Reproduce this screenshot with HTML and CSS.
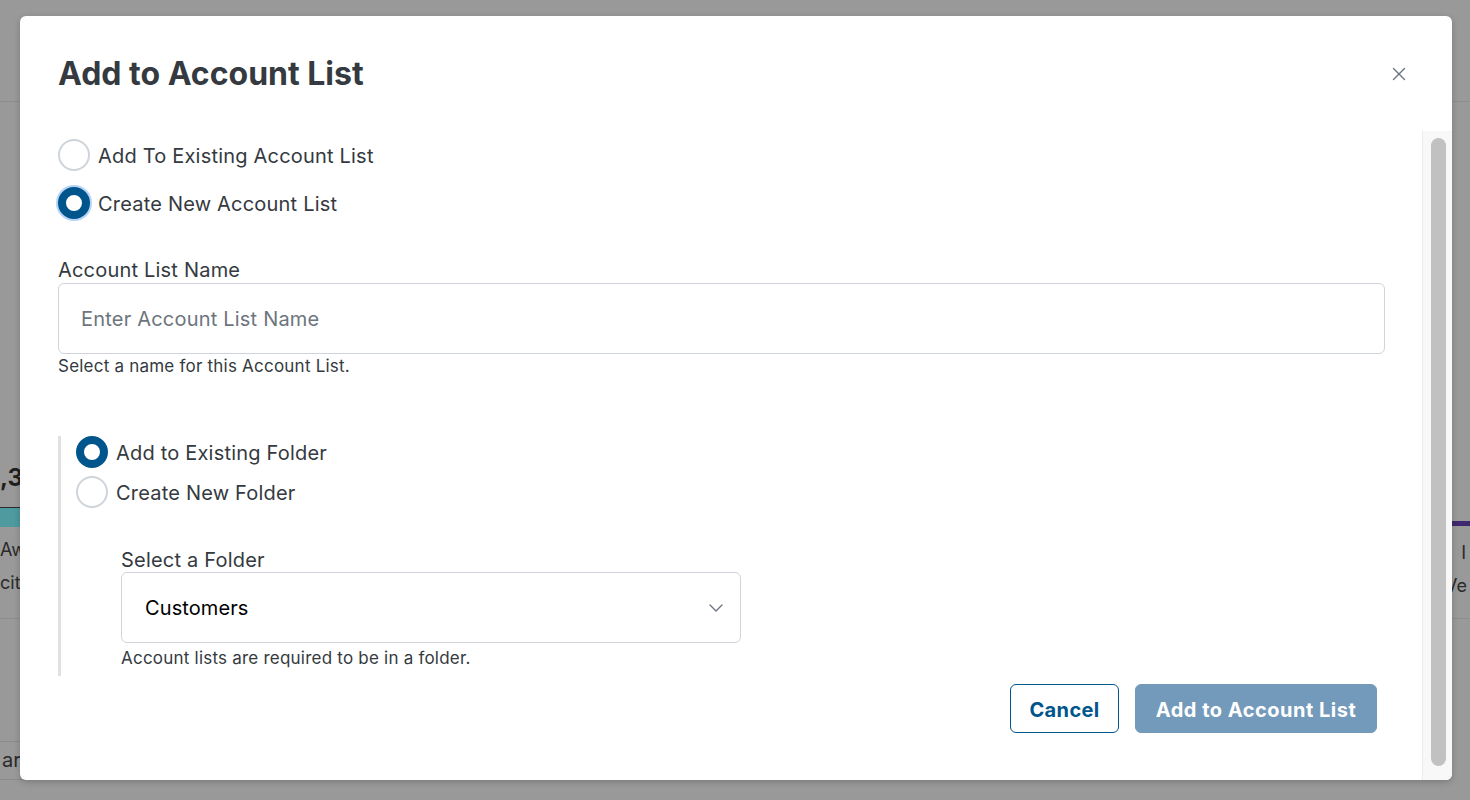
FILE: index.html
```html
<!DOCTYPE html>
<html lang="en">
<head>
<meta charset="utf-8">
<title>Add to Account List</title>
<link rel="stylesheet" href="styles.css">
</head>
<body>
<div class="page">
  <div class="page-header"></div>
  <div class="page-stats">
    <div class="stat stat-left">
      <div class="stat-num">,3</div>
      <div class="stat-bar teal"></div>
      <div class="stat-title">Aw</div>
      <div class="stat-sub">cit</div>
    </div>
    <div class="stat stat-right">
      <div class="stat-num">&nbsp;</div>
      <div class="stat-bar purple"></div>
      <div class="stat-title">I</div>
      <div class="stat-sub">Ve</div>
    </div>
  </div>
  <div class="page-divider"></div>
  <div class="page-search">ar</div>
</div>

<div class="modal" role="dialog" aria-labelledby="modal-title">
  <div class="modal-header">
    <h1 id="modal-title" class="modal-title">Add to Account List</h1>
    <button class="close-btn" aria-label="Close">
      <svg width="14" height="14" viewBox="0 0 14 14"><path d="M1.5 1.5 L12.5 12.5 M12.5 1.5 L1.5 12.5" stroke="#6c757d" stroke-width="1.4" fill="none" stroke-linecap="round"/></svg>
    </button>
  </div>
  <div class="modal-main">
    <div class="modal-body">
      <div class="radio-group">
        <label class="radio-row"><span class="radio"></span><span class="radio-label">Add To Existing Account List</span></label>
        <label class="radio-row"><span class="radio checked focus"></span><span class="radio-label">Create New Account List</span></label>
      </div>

      <div class="field name-field">
        <div class="field-label">Account List Name</div>
        <div class="input"><span class="placeholder">Enter Account List Name</span></div>
        <div class="help help-name">Select a name for this Account List.</div>
      </div>

      <div class="folder-section">
        <div class="radio-group tight">
          <label class="radio-row"><span class="radio checked"></span><span class="radio-label">Add to Existing Folder</span></label>
          <label class="radio-row"><span class="radio"></span><span class="radio-label">Create New Folder</span></label>
        </div>
        <div class="field folder-field">
          <div class="field-label">Select a Folder</div>
          <div class="select">
            <span class="select-value">Customers</span>
            <svg class="chevron" width="14" height="8" viewBox="0 0 14 8"><path d="M1 1 L7 7 L13 1" stroke="#6c757d" stroke-width="1.4" fill="none" stroke-linecap="round" stroke-linejoin="round"/></svg>
          </div>
          <div class="help help-folder">Account lists are required to be in a folder.</div>
        </div>
      </div>

      <div class="footer">
        <button class="btn btn-outline">Cancel</button>
        <button class="btn btn-primary" disabled>Add to Account List</button>
      </div>
    </div>
    <div class="scrollbar"><div class="thumb"></div></div>
  </div>
</div>
</body>
</html>
```
FILE: styles.css
```css
* { box-sizing: border-box; }
html, body { margin: 0; padding: 0; }
body {
  width: 1470px;
  height: 800px;
  overflow: hidden;
  background: #999999;
  font-family: Inter, "Noto Sans", "Liberation Sans", sans-serif;
  color: #343a40;
  position: relative;
}

/* background page (already dimmed by overlay colours) */
.page { width: 1470px; height: 800px; overflow: hidden; }
.page-header { height: 102px; border-bottom: 1px solid #8d8d8d; }
.page-stats {
  display: flex;
  justify-content: space-between;
  margin-top: 360px;
}
.stat { width: 60px; }
.stat-num {
  height: 28px;
  font-size: 24px;
  font-weight: 700;
  color: #1f1f1f;
  line-height: 28px;
  margin-top: 2px;
}
.stat-bar { height: 20px; margin-top: 15px; }
.stat-bar.teal { background: #4e9a9f; border-top: 1px solid #2a2a2a; }
.stat-bar.purple { background: transparent; border-top: 5px solid #40286e; height: 6px; margin-top: 29px; }
.stat-title { font-size: 18px; color: #2a2a2a; margin-top: 12px; line-height: 22px; }
.stat-sub { font-size: 18px; color: #2a2a2a; margin-top: 11px; line-height: 22px; }
.stat-right { text-align: right; }
.stat-right .stat-title { margin-top: 15px; padding-right: 4px; }
.stat-right .stat-sub { padding-right: 3px; }
.page-divider { height: 1px; background: #8d8d8d; margin-top: 21px; }
.page-search {
  width: 200px;
  height: 39px;
  margin-top: 122px;
  border: 1px solid #8a8a8a;
  border-left: 0;
  font-size: 20px;
  line-height: 36px;
  padding-left: 2px;
  color: #2a2a2a;
}

/* modal */
.modal {
  position: absolute;
  left: 20px;
  top: 16px;
  width: 1432px;
  height: 764px;
  background: #ffffff;
  border-radius: 6px;
  box-shadow: 0 2px 6px rgba(0, 0, 0, 0.2);
  display: flex;
  flex-direction: column;
  overflow: hidden;
}
.modal-header {
  height: 115px;
  flex: none;
  display: flex;
  align-items: flex-start;
  justify-content: space-between;
  padding: 36px 46px 0 38px;
}
.modal-title {
  margin: 0;
  font-size: 32px;
  font-weight: 700;
  line-height: 44px;
  color: #343a40;
}
.close-btn {
  border: 0;
  background: transparent;
  padding: 0;
  margin-top: 15px;
  width: 14px;
  height: 14px;
  display: flex;
}
.modal-main { flex: 1; display: flex; min-height: 0; }
.modal-body {
  flex: 1;
  padding: 8px 37px 0 38px;
  display: flex;
  flex-direction: column;
}
.scrollbar {
  width: 30px;
  flex: none;
  background: #f8f8f8;
  border-left: 1px solid #ededed;
  padding: 7px 6px 14px 8px;
  display: flex;
}
.thumb {
  flex: 1;
  background: #c1c1c1;
  border-radius: 8px;
}

.radio-group { display: flex; flex-direction: column; gap: 16px; }
.radio-group.tight { gap: 8px; }
.radio-row { display: flex; align-items: center; gap: 8px; height: 32px; }
.radio {
  width: 32px;
  height: 32px;
  flex: none;
  border-radius: 50%;
  border: 2px solid #ced4da;
  background: #fff;
}
.radio.checked {
  border: 8px solid #00568c;
}
.radio.focus {
  box-shadow: 0 0 0 2px #b6d3f5;
}
.radio-label { font-size: 20px; line-height: 24px; color: #343a40; letter-spacing: 0.2px; padding-top: 1px; }

.field-label { font-size: 20px; line-height: 24px; color: #343a40; margin-bottom: 1px; letter-spacing: 0.2px; }
.name-field { margin-top: 39px; }
.input, .select {
  height: 71px;
  border: 1px solid #ced4da;
  border-radius: 6px;
  display: flex;
  align-items: center;
  padding: 0 22px;
  background: #fff;
}
.placeholder { font-size: 20px; color: #6c757d; letter-spacing: 0.2px; }
.help { font-size: 17px; line-height: 20px; color: #343a40; letter-spacing: 0.22px; }
.help-name { margin-top: 2px; }

.folder-section {
  margin-top: 60px;
  border-left: 3px solid #e0e0e0;
  padding: 0 0 8px 15px;
}
.folder-field { margin-top: 40px; margin-left: 45px; width: 620px; }
.folder-field .field-label { margin-bottom: 0; }
.select { justify-content: space-between; padding: 0 17px 0 23px; }
.select-value { font-size: 20px; color: #000; letter-spacing: 0.1px; }
.help-folder { margin-top: 5px; }

.footer {
  display: flex;
  justify-content: flex-end;
  gap: 16px;
  margin-top: 8px;
  padding-right: 8px;
}
.btn {
  height: 49px;
  border-radius: 6px;
  font-family: inherit;
  font-size: 20px;
  font-weight: 700;
  padding: 3px 0 0;
  letter-spacing: 0.5px;
}
.btn-outline {
  width: 109px;
  background: #fff;
  border: 1px solid #00568c;
  color: #00568c;
  letter-spacing: 0.35px;
}
.btn-primary {
  width: 242px;
  background: #739abb;
  border: 1px solid #739abb;
  color: #fff;
}
```
